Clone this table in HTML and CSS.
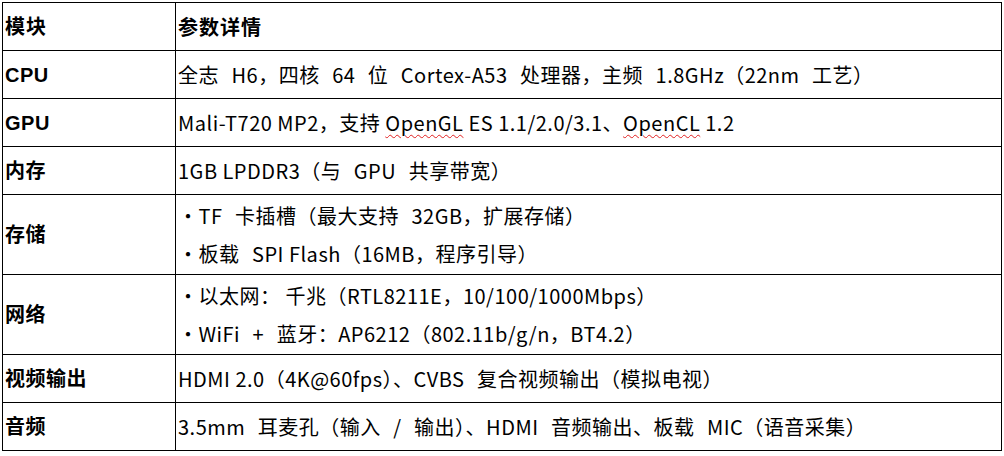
FILE: index.html
```html
<!DOCTYPE html>
<html lang="zh-CN">
<head>
<meta charset="utf-8">
<title>规格</title>
<link rel="stylesheet" href="styles.css">
</head>
<body>
<table class="spec">
  <colgroup><col class="c1"><col class="c2"></colgroup>
  <tr class="r1"><th>模块</th><th>参数详情</th></tr>
  <tr class="r1"><td class="k">CPU</td><td>全志<span class="g"> </span>H6，四核<span class="g"> </span>64<span class="g"> </span>位<span class="g"> </span>Cortex-A53<span class="g"> </span>处理器，主频<span class="g"> </span>1.8GHz（22nm<span class="g"> </span>工艺）</td></tr>
  <tr class="r1"><td class="k">GPU</td><td>Mali-T720 MP2，支持 <span class="sp">OpenGL</span> ES 1.1/2.0/3.1、<span class="sp">OpenCL</span> 1.2</td></tr>
  <tr class="r1"><td class="k">内存</td><td>1GB LPDDR3（与<span class="g"> </span>GPU<span class="g"> </span>共享带宽）</td></tr>
  <tr class="r2"><td class="k">存储</td><td><div class="li">・TF<span class="g"> </span>卡插槽（最大支持<span class="g"> </span>32GB，扩展存储）</div><div class="li">・板载<span class="g"> </span>SPI Flash（16MB，程序引导）</div></td></tr>
  <tr class="r2"><td class="k">网络</td><td><div class="li">・以太网： 千兆（RTL8211E，10/100/1000Mbps）</div><div class="li">・WiFi<span class="g"> </span>+<span class="g"> </span>蓝牙：AP6212（802.11b/g/n，BT4.2）</div></td></tr>
  <tr class="r1"><td class="k">视频输出</td><td>HDMI 2.0（4K@60fps）、CVBS<span class="g"> </span>复合视频输出（模拟电视）</td></tr>
  <tr class="r1"><td class="k">音频</td><td>3.5mm<span class="g"> </span>耳麦孔（输入<span class="g"> </span>/<span class="g"> </span>输出）、HDMI<span class="g"> </span>音频输出、板载<span class="g"> </span>MIC（语音采集）</td></tr>
</table>
</body>
</html>
```
FILE: styles.css
```css
html, body { background: #fff; }
body { margin: 2px; }
.spec {
  border-collapse: collapse;
  width: 1000px;
  table-layout: fixed;
  font-family: "Noto Sans CJK SC", sans-serif;
  font-size: 20px;
  color: #000;
}
.c1 { width: 173px; }
.spec th, .spec td {
  border: 1px solid #000;
  padding: 0 2px;
  text-align: left;
  vertical-align: middle;
  white-space: nowrap;
  line-height: 38px;
  letter-spacing: 0.5px;
}
.spec th, .spec td.k {
  font-family: "Liberation Sans", "Noto Sans CJK SC", sans-serif;
  font-weight: bold;
  letter-spacing: 1px;
}
.spec td.k { letter-spacing: 0.5px; }
.spec th + th { font-family: "Noto Sans CJK SC", sans-serif; }
.r1 { height: 48px; }
.r2 { height: 80px; }
.li { line-height: 38px; }
.g { word-spacing: 7.5px; }
.sp {
  text-decoration: underline wavy #e02020;
  text-decoration-thickness: 1px;
  text-underline-offset: 3px;
}
```
